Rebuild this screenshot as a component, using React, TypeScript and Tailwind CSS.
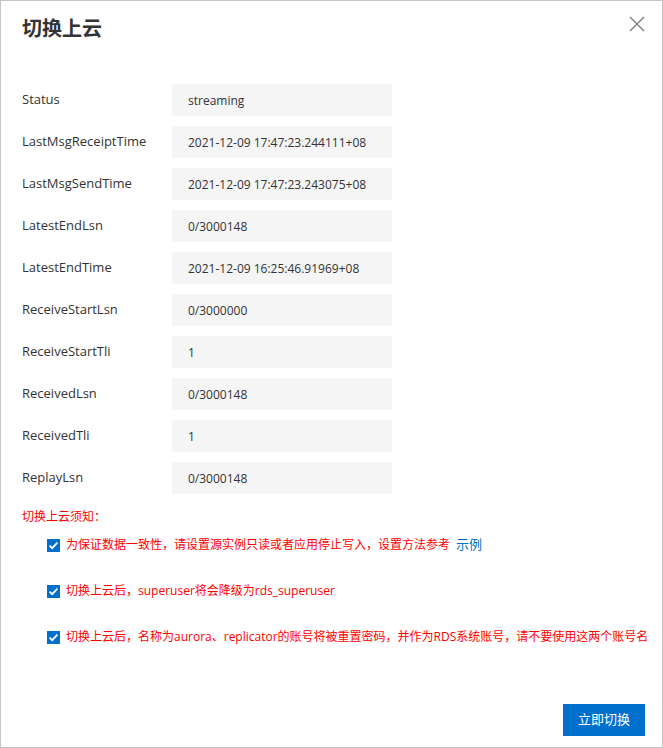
import React from "react";

const rows: [string, string][] = [
  ["Status", "streaming"],
  ["LastMsgReceiptTime", "2021-12-09 17:47:23.244111+08"],
  ["LastMsgSendTime", "2021-12-09 17:47:23.243075+08"],
  ["LatestEndLsn", "0/3000148"],
  ["LatestEndTime", "2021-12-09 16:25:46.91969+08"],
  ["ReceiveStartLsn", "0/3000000"],
  ["ReceiveStartTli", "1"],
  ["ReceivedLsn", "0/3000148"],
  ["ReceivedTli", "1"],
  ["ReplayLsn", "0/3000148"],
];

function Check() {
  return (
    <svg width="13" height="13" viewBox="0 0 13 13" className="shrink-0">
      <rect x="0" y="0" width="13" height="13" fill="#0070cc" />
      <path d="M2.6 6.6 L5.2 9.2 L10.4 3.6" fill="none" stroke="#fff" strokeWidth="1.8" />
    </svg>
  );
}

const font = { fontFamily: '"Open Sans", "Noto Sans CJK SC", sans-serif' };

export default function App() {
  return (
    <div
      className="w-[663px] h-[748px] border border-[#c4c4c4] bg-white flex flex-col text-[#333]"
      style={font}
    >
      <div className="flex items-center justify-between pl-[21px] pr-[17px] pt-[13px] h-[43px]">
        <div className="text-[20px] font-bold text-[#333] leading-[28px]">切换上云</div>
        <svg width="16" height="16" viewBox="0 0 16 16" className="mt-[-10px]">
          <path d="M1 1 L15 15 M15 1 L1 15" stroke="#888" strokeWidth="1.6" />
        </svg>
      </div>
      <div className="flex flex-col gap-[10px] pl-[21px] mt-[40px]">
        {rows.map(([k, v]) => (
          <div key={k} className="flex h-[32px]">
            <div className="w-[150px] text-[13px] leading-[18px] pt-[6px] text-[#333]">{k}</div>
            <div className="w-[220px] bg-[#f5f5f5] pl-[16px] text-[12px] leading-[32px] pt-[1px] text-[#333]">
              {v}
            </div>
          </div>
        ))}
      </div>
      <div className="pl-[21px] mt-[14px] text-[12px] leading-[18px] text-[#ff0000]">切换上云须知：</div>
      <div className="flex flex-col pl-[46px] mt-[10px] gap-[28px] text-[12px] text-[#ff0000]">
        <div className="flex items-center gap-[6px] h-[18px]">
          <Check />
          <span>
            为保证数据一致性，请设置源实例只读或者应用停止写入，设置方法参考
            <span className="text-[#0070cc] text-[13px] ml-[6px]">示例</span>
          </span>
        </div>
        <div className="flex items-center gap-[6px] h-[18px]">
          <Check />
          <span>切换上云后，superuser将会降级为rds_superuser</span>
        </div>
        <div className="flex items-center gap-[6px] h-[18px] whitespace-nowrap">
          <Check />
          <span>切换上云后，名称为aurora、replicator的账号将被重置密码，并作为RDS系统账号，请不要使用这两个账号名</span>
        </div>
      </div>
      <div className="flex-1" />
      <div className="flex justify-end pr-[17px] pb-[11px]">
        <button className="w-[82px] h-[32px] bg-[#0070cc] text-white text-[13px]">立即切换</button>
      </div>
    </div>
  );
}
